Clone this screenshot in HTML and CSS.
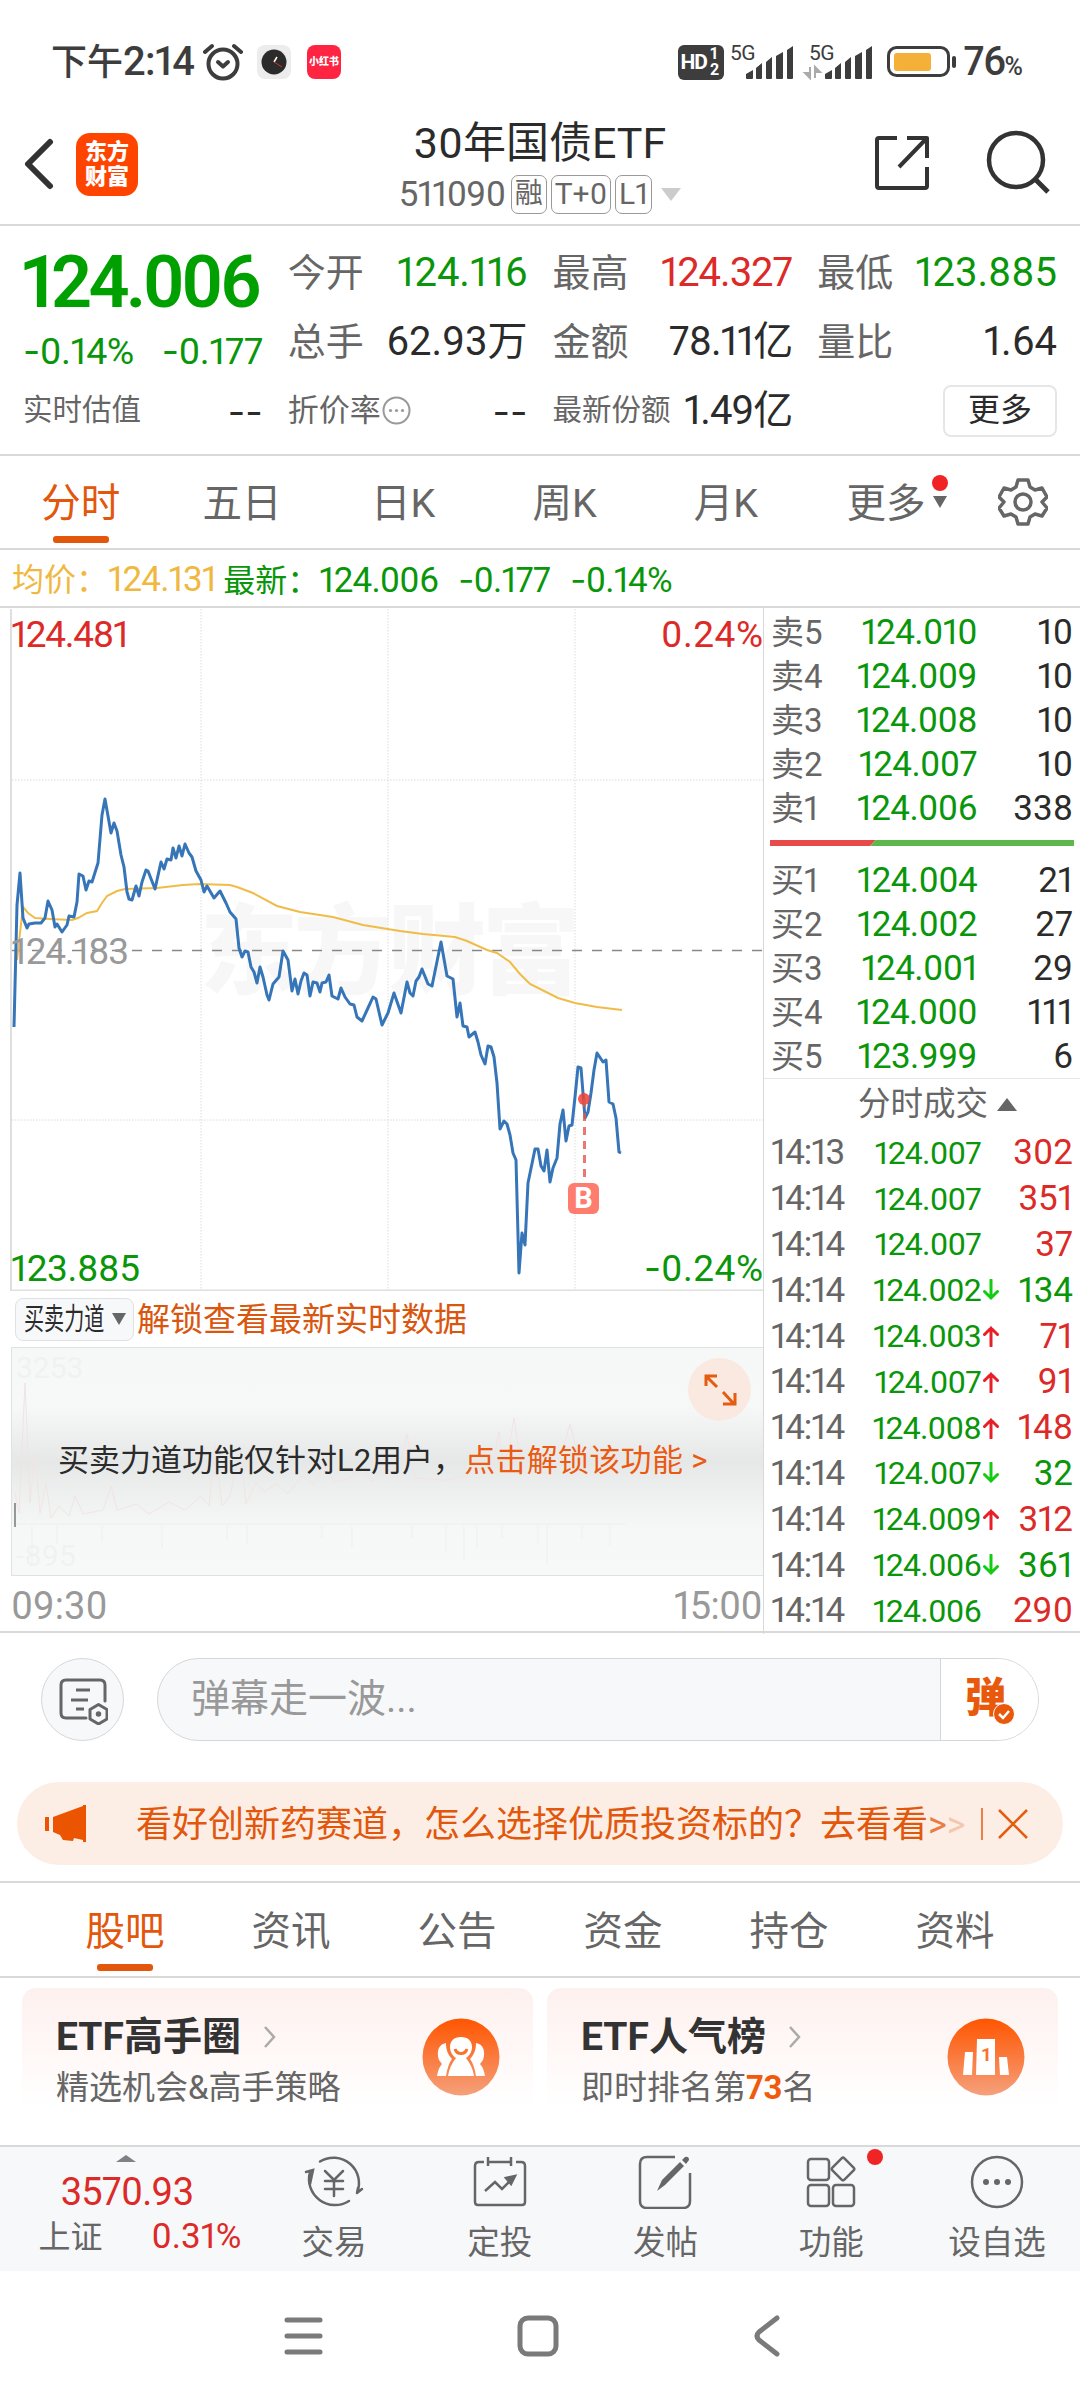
FILE: index.html
```html
<!DOCTYPE html>
<html lang="zh-CN">
<head>
  <meta charset="UTF-8">
  <title>30年国债ETF</title>
  <link rel="stylesheet" href="styles.css">
</head>
<body>
  <!-- status bar -->
  <div class="status">
    <div class="status-left">
      <span class="clock"><span class="cn">下午</span>2:14</span>
      <svg class="alarm" width="40" height="38" viewBox="0 0 40 38" fill="none" stroke="#3d3d3d" stroke-linecap="round">
        <circle cx="20" cy="21" r="14.5" stroke-width="4"/>
        <path d="M2 9l7-6M38 9l-7-6" stroke-width="4"/>
        <path d="M15 19l5 4.500 5-4.500" stroke-width="4" stroke-linejoin="round"/>
      </svg>
      <svg class="app-clock" width="34" height="34" viewBox="0 0 34 34">
        <rect width="34" height="34" rx="8" fill="#ececec"/>
        <circle cx="17" cy="17" r="12.500" fill="#2b2b2b"/>
        <path d="M17 17l3-5" stroke="#fff" stroke-width="1.500"/>
        <path d="M17 17l8 5" stroke="#c33" stroke-width="1"/>
      </svg>
      <span class="app-red">小红书</span>
    </div>
    <div class="status-right">
      <span class="hd">HD<span class="hd-n"><i>1</i><i>2</i></span></span>
      <svg class="sig" width="64" height="36" viewBox="0 0 64 36" fill="#3d3d3d">
        <text class="g5" x="0" y="16">5G</text>
        <path d="M16 30l7-4v8q0 1-1 1h-5q-1 0-1-1zM26 24l6-5v15q0 1-1 1h-4q-1 0-1-1zM36 18l6-5v21q0 1-1 1h-4q-1 0-1-1zM46 12l7-4v26q0 1-1 1h-5q-1 0-1-1zM57 6l6-4v32q0 1-1 1h-4q-1 0-1-1z"/>
      </svg>
      <svg class="sig" width="68" height="36" viewBox="0 0 68 36" fill="#3d3d3d">
        <text class="g5" x="4" y="16">5G</text>
        <path d="M5 23v11L0 29h4M10 34V23l5 5h-4" fill="#aaa" stroke="#aaa" stroke-width="2"/>
        <path d="M20 30l7-4v8q0 1-1 1h-5q-1 0-1-1zM30 24l6-5v15q0 1-1 1h-4q-1 0-1-1zM40 18l6-5v21q0 1-1 1h-4q-1 0-1-1zM50 12l7-4v26q0 1-1 1h-5q-1 0-1-1zM61 6l6-4v32q0 1-1 1h-4q-1 0-1-1z"/>
      </svg>
      <svg class="battery" width="70" height="32" viewBox="0 0 70 32">
        <rect x="1.500" y="1.500" width="60" height="28" rx="8" fill="none" stroke="#3d3d3d" stroke-width="3"/>
        <rect x="7" y="7" width="37" height="18" rx="3" fill="#f5b03a"/>
        <rect x="65" y="10" width="4" height="12" rx="2" fill="#3d3d3d"/>
      </svg>
      <span class="bat-num">76<small>%</small></span>
    </div>
  </div>

  <!-- title bar -->
  <header class="header">
    <div class="header-left">
      <svg width="32" height="54" viewBox="0 0 32 54" fill="none" stroke="#333" stroke-width="6" stroke-linecap="round" stroke-linejoin="round"><path d="M26 5L4 27l22 22"/></svg>
      <div class="logo">东方<br>财富</div>
    </div>
    <div class="header-mid">
      <h1>30年国债ETF</h1>
      <div class="code"><span class="code-num">511090</span><b>融</b><b>T+0</b><b>L1</b><i class="tri-code"></i></div>
    </div>
    <div class="header-right">
      <svg width="54" height="54" viewBox="0 0 54 54" fill="none" stroke="#333" stroke-width="4" stroke-linejoin="round">
        <path d="M22 2H4q-2 0-2 2v46q0 2 2 2h46q2 0 2-2V31M32 2h20v20M51 3L24 31"/>
      </svg>
      <svg width="66" height="66" viewBox="0 0 66 66" fill="none" stroke="#333" stroke-width="4.500"><circle cx="30" cy="30" r="27"/><path d="M49 49l13 13" stroke-width="5"/></svg>
    </div>
  </header>

  <!-- quote -->
  <section class="quote">
    <div class="last">124.006</div>
    <div class="cell"><label>今开</label><span class="green">124.116</span></div>
    <div class="cell"><label>最高</label><span class="red tight">124.327</span></div>
    <div class="cell"><label>最低</label><span class="green">123.885</span></div>
    <div class="chg green"><span><i class="neg">-</i>0.14%</span><span><i class="neg">-</i>0.177</span></div>
    <div class="cell"><label>总手</label><span>62.93万</span></div>
    <div class="cell"><label>金额</label><span class="tight">78.11亿</span></div>
    <div class="cell"><label>量比</label><span>1.64</span></div>
    <div class="cell"><label class="s">实时估值</label><span class="dash">--</span></div>
    <div class="cell"><label class="m">折价率</label>
      <svg class="info" width="29" height="29" viewBox="0 0 29 29"><circle cx="14.500" cy="14.500" r="13" fill="none" stroke="#999" stroke-width="2"/><g fill="#999"><circle cx="8.500" cy="14.500" r="1.600"/><circle cx="14.500" cy="14.500" r="1.600"/><circle cx="20.500" cy="14.500" r="1.600"/></g></svg>
      <span class="dash">--</span></div>
    <div class="cell"><label class="s">最新份额</label><span class="tight">1.49亿</span></div>
    <div class="cell"><span class="more">更多</span></div>
  </section>

  <nav class="tabs">
    <a class="on">分时</a><a>五日</a><a>日K</a><a>周K</a><a>月K</a>
    <a class="tab-more">更多<i class="tri-tab"></i><i class="dot"></i></a>
    <svg width="50" height="50" viewBox="0 0 50 50" fill="none" stroke="#666" stroke-width="3.500" stroke-linejoin="round">
      <path d="M20 3h10l2 7 5 3 7-2 5 9-5 5 5 6-5 8-7-2-5 3-2 7H20l-2-7-5-3-7 2-5-8 5-6-5-5 5-9 7 2 5-3z"/><circle cx="25" cy="25" r="8"/>
    </svg>
  </nav>

  <div class="avg"><span class="yellow">均价：<em>124.131</em></span><span class="green">最新：<em>124.006</em><em><i class="neg">-</i>0.177</em><em><i class="neg">-</i>0.14%</em></span></div>

  <main class="board">
    <div class="left">
      <svg class="chart" width="763" height="683" viewBox="0 608 763 683" fill="none">
        <text class="wm" x="200" y="986" textLength="380">东方财富</text>
        <path d="M201 609V1290M388 609V1290M575 609V1290M12 780H763M12 1120H763" stroke="#dcdcdc" stroke-dasharray="1.500 1.500"/>
        <path d="M11 609V1290.500H763" stroke="#dfdfdf" stroke-width="2"/>
        <path d="M12 950.500H763" stroke="#888" stroke-width="1.500" stroke-dasharray="10 10"/>
        <polyline class="avg-line" points="17,960 20,933 23,907 28,913 35,918 50,919 72,920 78,918 87,913 97,911 102,903 107,896 117,891 125,889 157,888 183,885 200,884 230,885 237,887 253,893 277,906 300,912 333,917 363,925 400,931 423,934 455,937 467,941 487,950 497,953 510,962 520,974 530,984 558,998 575,1003 597,1007 622,1010"/>
        <polyline class="price-line" points="14,1027 17,905 20,873 23,918 27,928 29,924 35,923 41,923 45,918 48,901 52,910 55,927 57,924 62,932 67,925 69,916 74,917 77,902 79,874 83,876 86,890 89,881 92,882 98,863 102,815 105,799 111,833 114,823 117,831 121,855 124,867 127,892 129,899 132,900 136,886 139,896 142,882 146,870 148,871 155,889 161,862 164,869 167,859 171,860 173,848 176,858 179,846 182,856 185,844 189,853 192,857 196,871 201,880 204,892 207,886 214,898 220,891 226,903 230,912 236,919 239,948 242,957 245,951 248,952 251,967 254,972 257,983 260,967 263,977 267,995 269,1000 273,984 279,977 283,951 288,960 292,991 295,979 298,994 301,981 304,973 307,975 310,996 313,982 317,983 320,992 322,983 326,982 329,975 332,996 338,999 341,988 345,997 350,1004 354,1005 357,1017 362,1021 368,1008 373,997 376,999 382,1025 388,1013 394,993 401,1013 407,982 410,993 413,996 416,981 419,977 422,969 428,984 432,986 441,942 447,976 453,979 457,1017 460,1003 463,1026 467,1027 469,1037 475,1032 478,1042 481,1055 485,1064 488,1046 491,1047 494,1057 497,1083 500,1129 504,1121 507,1124 510,1135 513,1153 516,1160 519,1273 522,1233 525,1245 528,1183 535,1149 538,1149 541,1166 544,1171 547,1150 550,1182 553,1168 557,1158 560,1124 563,1110 566,1141 569,1126 572,1125 575,1097 578,1067 581,1068 585,1118 588,1112 591,1093 594,1070 597,1053 603,1062 606,1060 609,1102 613,1104 616,1118 619,1152 621,1153"/>
        <circle cx="584" cy="1099" r="6" fill="#ee4035" fill-opacity=".85"/>
        <path d="M584.500 1099V1178" stroke="#e0574c" stroke-opacity=".8" stroke-width="3" stroke-dasharray="8 6"/>
        <rect x="568" y="1183" width="31" height="31" rx="6" fill="#ff7d6e"/>
        <text class="buy" x="583.500" y="1208" text-anchor="middle">B</text>
        <text class="lab" x="11" y="646.500" fill="#dc2a28" textLength="118">124.481</text>
        <text class="lab" x="763" y="646.500" fill="#dc2a28" text-anchor="end" textLength="102">0.24%</text>
        <text class="lab" x="11" y="963.500" fill="#999" textLength="118">124.183</text>
        <text class="lab" x="11" y="1280.500" fill="#0a960a" textLength="129">123.885</text>
        <text class="lab" x="763" y="1280.500" fill="#0a960a" text-anchor="end" textLength="102">0.24%</text>
        <text class="lab neg" x="644" y="1280.500" fill="#0a960a">-</text>
      </svg>
      <div class="sub-bar">
        <span class="pick"><span>买卖力道</span><i></i></span><span class="unlock">解锁查看最新实时数据</span>
      </div>
      <div class="sub-chart">
        <svg class="ghost" width="752" height="226" viewBox="0 0 752 226" fill="none">
          <text x="4" y="30">3253</text><text x="4" y="218">-895</text>
          <path d="M3 145l4 20 6-130 5 120 5-50 5 60 6-30 5 35 8-12 10 10 6-20 8 18 20-4 8-24 6 24 20-6 12 10 20-12 16 8 16-14 8 10 6-60 7 60 8-10 10-50 6 58 10-22 8 10 12-8 12 10 14-18 12 8 10-20 10 18 16-4 12-10 10 14 16-20 10 14 9-42 8 44 30 2 22-4 12-20 12 16 8-40 6 42 9-56 8 54 12-26 10 28 14-8 12-42 10 40 14-20 12 22 20-14 12 10 10-16 8 18" stroke="#f1e4e3"/>
          <path d="M3 176h610M20 178v40M45 178v18M90 178v16M150 178v22M215 178v15M235 178v18M310 178v12M340 178v22M400 178v12M434 178v26M452 178v34M465 178v22M490 178v12M526 178v18M535 178v38M570 178v12M598 178v20" stroke="#edefef"/>
          <path d="M3 155v24" stroke="#777" stroke-width="1.500"/>
        </svg>
        <p>买卖力道功能仅针对L2用户，<a>点击解锁该功能 &gt;</a></p>
        <span class="expand"><svg width="34" height="34" viewBox="0 0 34 34" fill="none" stroke="#e35c10" stroke-width="3"><path d="M3 13V3h11M3 3l11 11M32 20v11H20M31 31L20 19"/></svg></span>
      </div>
      <div class="hours"><span>09:30</span><span>15:00</span></div>
    </div>

    <div class="right">
      <div class="depth">
        <div><span>卖5</span><em>124.010</em><b>10</b></div>
        <div><span>卖4</span><em>124.009</em><b>10</b></div>
        <div><span>卖3</span><em>124.008</em><b>10</b></div>
        <div><span>卖2</span><em>124.007</em><b>10</b></div>
        <div><span>卖1</span><em>124.006</em><b>338</b></div>
      </div>
      <svg class="ratio" width="304" height="6" viewBox="0 0 304 6"><path d="M0 0h106l-6 6H0z" fill="#e84a4a"/><path d="M106 0h198v6H100z" fill="#5cb84a"/></svg>
      <div class="depth">
        <div><span>买1</span><em>124.004</em><b>21</b></div>
        <div><span>买2</span><em>124.002</em><b>27</b></div>
        <div><span>买3</span><em>124.001</em><b>29</b></div>
        <div><span>买4</span><em>124.000</em><b>111</b></div>
        <div><span>买5</span><em>123.999</em><b>6</b></div>
      </div>
      <div class="deal-head">分时成交<i></i></div>
      <div class="deals">
        <div><span>14:13</span><em>124.007</em><i></i><b class="red">302</b></div>
        <div><span>14:14</span><em>124.007</em><i></i><b class="red">351</b></div>
        <div><span>14:14</span><em>124.007</em><i></i><b class="red">37</b></div>
        <div><span>14:14</span><em>124.002</em><i class="down"><svg viewBox="0 0 16 22"><path d="M8 1v18M1.500 12.500L8 19l6.500-6.500"/></svg></i><b class="green">134</b></div>
        <div><span>14:14</span><em>124.003</em><i class="up"><svg viewBox="0 0 16 22"><path d="M8 21V3M1.500 9.500L8 3l6.500 6.500"/></svg></i><b class="red">71</b></div>
        <div><span>14:14</span><em>124.007</em><i class="up"><svg viewBox="0 0 16 22"><path d="M8 21V3M1.500 9.500L8 3l6.500 6.500"/></svg></i><b class="red">91</b></div>
        <div><span>14:14</span><em>124.008</em><i class="up"><svg viewBox="0 0 16 22"><path d="M8 21V3M1.500 9.500L8 3l6.500 6.500"/></svg></i><b class="red">148</b></div>
        <div><span>14:14</span><em>124.007</em><i class="down"><svg viewBox="0 0 16 22"><path d="M8 1v18M1.500 12.500L8 19l6.500-6.500"/></svg></i><b class="green">32</b></div>
        <div><span>14:14</span><em>124.009</em><i class="up"><svg viewBox="0 0 16 22"><path d="M8 21V3M1.500 9.500L8 3l6.500 6.500"/></svg></i><b class="red">312</b></div>
        <div><span>14:14</span><em>124.006</em><i class="down"><svg viewBox="0 0 16 22"><path d="M8 1v18M1.500 12.500L8 19l6.500-6.500"/></svg></i><b class="green">361</b></div>
        <div><span>14:14</span><em>124.006</em><i></i><b class="red">290</b></div>
      </div>
    </div>
  </main>

  <!-- comment input -->
  <div class="danmu">
    <span class="danmu-set">
      <svg width="50" height="50" viewBox="0 0 50 50" fill="none" stroke="#666" stroke-width="3">
        <path d="M28 43H8q-5 0-5-5V10q0-5 5-5h34q5 0 5 5v16" stroke-linecap="round"/>
        <path d="M18 15h14M13 25h17M18 34h8"/>
        <path d="M40.500 29.500l8.500 5v9.500l-8.500 5-8.500-5v-9.500z" stroke-linejoin="round"/><circle cx="40.500" cy="39" r="2" fill="#666" stroke-width="1.500"/>
      </svg>
    </span>
    <div class="danmu-input">
      <span class="ph">弹幕走一波...</span>
      <span class="danmu-on">弹<svg width="22" height="22" viewBox="0 0 22 22"><circle cx="11" cy="11" r="10.500" fill="#e8590c" stroke="#fff"/><path d="M6 11l4 4 6-7" fill="none" stroke="#fff" stroke-width="2.500"/></svg></span>
    </div>
  </div>

  <div class="banner">
    <svg width="42" height="38" viewBox="0 0 42 38" fill="#eb5400"><path d="M0 12h4v14H0zM8 12L38 1V0h3v37h-3v-2l-9-2-1 3-10-1-3-5-7-3z"/></svg>
    <span class="banner-text">看好创新药赛道，怎么选择优质投资标的？去看看<span class="gg"><i>&gt;</i><i>&gt;</i></span></span>
    <svg class="close" width="48" height="34" viewBox="0 0 48 34" fill="none" stroke="#e35c10"><path d="M1 1v32" stroke-width="1.500"/><path d="M18 3l28 28M46 3L18 31" stroke-width="2.500"/></svg>
  </div>

  <nav class="tabs tabs2">
    <a class="on">股吧</a><a>资讯</a><a>公告</a><a>资金</a><a>持仓</a><a>资料</a>
  </nav>

  <div class="cards">
    <div class="card">
      <div>
        <h2>ETF高手圈<svg width="12" height="22" viewBox="0 0 12 22"><path d="M1 1l9 10-9 10"/></svg></h2>
        <p>精选机会&amp;高手策略</p>
      </div>
      <svg width="78" height="78" viewBox="0 0 78 78">
        <defs><linearGradient id="og" x2="0" y2="1"><stop stop-color="#ff5500"/><stop offset="1" stop-color="#f5a07c"/></linearGradient></defs>
        <circle cx="39" cy="39" r="38.500" fill="url(#og)"/>
        <path fill="#fff" d="M24 25c-7 1-10 8-7 17l3 4c-3 3-4 7-5 12h9c1-7 3-13 6-17-5-5-6-11-6-16zM54 25c7 1 10 8 7 17l-3 4c3 3 4 7 5 12h-9c-1-7-3-13-6-17 5-5 6-11 6-16z"/>
        <path fill="#fff" d="M39 19c-7 0-11 4-11 10 0 5 3 9 6 11-4 5-7 11-8 18h26c-1-7-4-13-8-18 3-2 6-6 6-11 0-6-4-10-11-10z"/>
        <path d="M33 31c2 6 10 6 12 0" fill="none" stroke="#f8732c" stroke-width="3"/>
      </svg>
    </div>
    <div class="card">
      <div>
        <h2>ETF人气榜<svg width="12" height="22" viewBox="0 0 12 22"><path d="M1 1l9 10-9 10"/></svg></h2>
        <p>即时排名第<b>73</b>名</p>
      </div>
      <svg width="78" height="78" viewBox="0 0 78 78">
        <circle cx="39" cy="39" r="38.500" fill="url(#og)"/>
        <path fill="#fff" d="M18 34h8l-1 23h-9zM30 21h18v36H29zM52 39h8l2 18h-9z"/>
        <text class="first" x="39" y="43" text-anchor="middle">1</text>
      </svg>
    </div>
  </div>

  <!-- bottom toolbar -->
  <footer class="toolbar">
    <div class="index">
      <i></i>
      <span class="pts">3570.93</span>
      <span class="idx"><label>上证</label>0.31%</span>
    </div>
    <div class="tool">
      <svg width="62" height="56" viewBox="0 0 62 56" fill="none" stroke="#666" stroke-width="2.500" stroke-linecap="round">
        <path d="M17 8.500A25.500 25.500 0 0 1 54 40l5-4M46 48A26 26 0 0 1 7 19M3 19l7-2-3 14M54 40l1-5"/>
        <path d="M22 18l9 9 9-9M31 27v16M22 28h18M22 36h18"/>
      </svg>
      <span>交易</span>
    </div>
    <div class="tool">
      <svg width="54" height="56" viewBox="0 0 54 56" fill="none" stroke="#666" stroke-width="2.500">
        <path d="M11 9H6q-4 0-4 4v36q0 3 3 3h44q3 0 3-3V13q0-4-4-4h-5M15 9h23M15 4v9M38 4v9"/>
        <path d="M12 38l10-9 7 7 9-9"/><path d="M33 25l9-2-4 8z" fill="#666"/>
      </svg>
      <span>定投</span>
    </div>
    <div class="tool">
      <svg width="54" height="56" viewBox="0 0 54 56" fill="none" stroke="#666" stroke-width="2.500">
        <path d="M37 4H9q-7 0-7 7v37q0 7 7 7h36q7 0 7-7V20"/>
        <path d="M19 38l5-11L42 9l4 4-19 19zM44 7l3-3q4-1 4 3l-3 4z" fill="#666" stroke="none"/>
      </svg>
      <span>发帖</span>
    </div>
    <div class="tool">
      <svg width="50" height="56" viewBox="0 0 50 56" fill="none" stroke="#666" stroke-width="2.500">
        <rect x="2" y="6" width="21" height="21" rx="3"/><rect x="2" y="32" width="21" height="21" rx="3"/><rect x="27" y="32" width="21" height="21" rx="3"/>
        <rect x="28.500" y="7.500" width="17" height="17" rx="2" transform="rotate(45 37 16)"/>
      </svg>
      <span>功能</span><i class="dot"></i>
    </div>
    <div class="tool">
      <svg width="54" height="56" viewBox="0 0 54 56"><circle cx="27" cy="29" r="25" fill="none" stroke="#666" stroke-width="2.500"/><g fill="#666"><circle cx="16" cy="29" r="3"/><circle cx="27" cy="29" r="3"/><circle cx="38" cy="29" r="3"/></g></svg>
      <span>设自选</span>
    </div>
  </footer>

  <div class="sysnav">
    <svg width="40" height="42" viewBox="0 0 40 42" stroke="#7a7a7a" stroke-width="5" stroke-linecap="round"><path d="M4 5h33M4 21h33M4 37h33"/></svg>
    <svg width="42" height="42" viewBox="0 0 42 42" fill="none" stroke="#7a7a7a" stroke-width="5"><rect x="3" y="3" width="36" height="36" rx="8"/></svg>
    <svg width="28" height="44" viewBox="0 0 28 44" fill="none" stroke="#7a7a7a" stroke-width="5" stroke-linecap="round" stroke-linejoin="round"><path d="M24 4L6 18q-4 4 0 8l18 14"/></svg>
  </div>
</body>
</html>
```
FILE: styles.css
```css
:root {
  --orange: #e2570c;
  --green: #0a960a;
  --red: #dc2a28;
  --gray: #666;
  --line: #d9d9d9;
}

* {
  box-sizing: border-box;
}

body {
  margin: 0;
  width: 1080px;
  height: 2400px;
  overflow: hidden;
  background: #fff;
  color: #2b2b2b;
  font-family: Roboto, "Noto Sans CJK SC", sans-serif;
  font-variant-numeric: proportional-nums;
  line-height: 1;
}

i, em {
  font-style: normal;
}

svg {
  display: block;
  flex: none;
}

.green { color: var(--green); }
.red { color: var(--red); }
.yellow { color: #f0b840; }

/* wider minus sign */
.neg {
  font-family: Inter, sans-serif;
}

/* status bar */
.status {
  height: 100px;
  padding: 24px 57px 0 51px;
  display: flex;
  justify-content: space-between;
  align-items: center;
  color: #3d3d3d;
}

.status-left, .status-right {
  display: flex;
  align-items: center;
}

.clock {
  font-size: 40px;
  font-weight: 500;
  letter-spacing: -.8px;
  white-space: nowrap;
  width: 150px;
}

.clock .cn {
  font-size: 36px;
  letter-spacing: 0;
}

.alarm { margin-left: 2px; }
.app-clock { margin-left: 14px; }

.app-red {
  margin-left: 16px;
  width: 34px;
  height: 34px;
  border-radius: 8px;
  background: #ff2442;
  color: #fff;
  font-size: 10px;
  font-weight: 900;
  line-height: 34px;
  text-align: center;
}

.hd {
  width: 46px;
  height: 35px;
  margin-right: 6px;
  padding-left: 3px;
  border-radius: 6px;
  background: #3d3d3d;
  color: #fff;
  font-size: 21px;
  font-weight: 700;
  display: flex;
  align-items: center;
  letter-spacing: -1px;
}

.hd-n {
  display: flex;
  flex-direction: column;
  font-size: 16px;
  margin-left: 3px;
}

.sig { overflow: visible; }

.g5 {
  font-size: 21px;
  letter-spacing: -.5px;
}

.status-right svg + svg { margin-left: 11px; }
.status-right svg.battery { margin-left: 14px; }

.bat-num {
  font-size: 40px;
  font-weight: 500;
  letter-spacing: -1.5px;
  margin-left: 7px;
}

.bat-num small {
  font-size: 25px;
  letter-spacing: 0;
}

/* title bar */
.header {
  height: 126px;
  border-bottom: 2px solid var(--line);
  display: grid;
  grid-template-columns: 1fr 340px 1fr;
}

.header-left {
  display: flex;
  align-items: center;
  padding: 4px 0 0 24px;
}

.logo {
  margin-left: 20px;
  width: 62px;
  height: 63px;
  border-radius: 14px;
  background: #ff4400;
  color: #fff;
  font-size: 22px;
  font-weight: 900;
  line-height: 25px;
  padding-top: 6px;
  text-align: center;
}

.header-mid {
  display: flex;
  flex-direction: column;
  align-items: center;
  padding-top: 20px;
}

h1 {
  margin: 0;
  font-size: 43px;
  font-weight: 400;
  line-height: 46px;
  white-space: nowrap;
}

.code {
  display: flex;
  align-items: center;
  gap: 4px;
  margin-top: 9px;
  color: var(--gray);
  font-size: 35px;
}

.code-num {
  width: 108px;
  letter-spacing: -.7px;
}

.code b {
  height: 39px;
  padding: 0 3px;
  border: 1.5px solid #999;
  border-radius: 7px;
  font-size: 30px;
  line-height: 36px;
  font-weight: 400;
}

.code b:nth-of-type(1) {
  font-size: 28px;
}

.tri-code {
  margin-left: 5px;
  border: 10px solid transparent;
  border-top: 13px solid #ccc;
  border-bottom: 0;
}

.header-right {
  display: flex;
  align-items: center;
  justify-content: flex-end;
  gap: 57px;
  padding: 2px 28px 0 0;
}

/* quote */
.quote {
  height: 230px;
  border-bottom: 2px solid var(--line);
  padding: 12px 23px 0;
  display: grid;
  grid-template-columns: repeat(4, minmax(0, 1fr));
  grid-template-rows: 69px 69px 69px;
  column-gap: 25px;
}

.cell {
  display: flex;
  align-items: center;
  justify-content: space-between;
  font-size: 40px;
  white-space: nowrap;
}

.cell label {
  color: var(--gray);
  font-size: 38px;
}

.cell label.s { font-size: 29.5px; }
.cell label.m { font-size: 31px; }
.cell .tight { letter-spacing: -1px; }

.cell .dash {
  font-family: Inter, sans-serif;
  font-size: 38px;
}

.info {
  margin-right: auto;
  margin-left: 1px;
}

.last {
  color: #00a000;
  font-size: 72px;
  font-weight: 600;
  letter-spacing: -3.8px;
  line-height: 89px;
  margin-left: -2px;
  white-space: nowrap;
}

.chg {
  display: flex;
  justify-content: space-between;
  align-items: center;
  font-size: 37.5px;
  padding-top: 20px;
  letter-spacing: -.5px;
}

.more {
  margin-left: auto;
  width: 114px;
  height: 52px;
  border: 2px solid #e6e6e6;
  border-radius: 8px;
  font-size: 32px;
  line-height: 47px;
  text-align: center;
}

/* tabs */
.tabs {
  height: 94px;
  border-bottom: 2px solid var(--line);
  display: flex;
  align-items: center;
  color: var(--gray);
  font-size: 39.5px;
}

.tabs a {
  position: relative;
  width: 161.3px;
  height: 92px;
  line-height: 95px;
  text-align: center;
}

.tabs .on { color: var(--orange); }

.tabs .on::after {
  content: "";
  position: absolute;
  left: 50%;
  bottom: 5px;
  width: 56px;
  height: 7px;
  margin-left: -28px;
  border-radius: 3px;
  background: var(--orange);
}

.tabs a.tab-more {
  width: 192px;
  padding-left: 40px;
  text-align: left;
}

.tri-tab {
  display: inline-block;
  margin-left: 8px;
  vertical-align: 9px;
  border: 7px solid transparent;
  border-top: 12px solid var(--gray);
  border-bottom: 0;
}

.dot {
  position: absolute;
  width: 16px;
  height: 16px;
  border-radius: 50%;
  background: #f02424;
}

.tab-more .dot {
  left: 126px;
  top: 19px;
}

/* average line */
.avg {
  height: 58px;
  border-bottom: 2px solid var(--line);
  padding: 3px 0 0 12px;
  display: flex;
  align-items: center;
  gap: 7px;
  font-size: 32px;
  white-space: nowrap;
}

.avg em {
  font-size: 35px;
  letter-spacing: -.8px;
}

.avg em + em { margin-left: 20px; }

/* chart board */
.board {
  height: 1025px;
  border-bottom: 2px solid var(--line);
  display: grid;
  grid-template-columns: 763px 317px;
}

.wm {
  font-size: 98px;
  font-weight: 900;
  fill: #f7f7f7;
}

.lab { font-size: 37px; }

.avg-line {
  stroke: #f0bc48;
  stroke-width: 2;
}

.price-line {
  stroke: #3575b8;
  stroke-width: 3;
  stroke-linejoin: round;
}

.buy {
  font-size: 29px;
  font-weight: 700;
  fill: #fff;
}

.sub-bar {
  height: 56px;
  display: flex;
  align-items: center;
  padding-left: 15px;
}

.pick {
  width: 119px;
  height: 43px;
  border: 1.5px solid #e0e1e4;
  border-radius: 8px;
  background: #f7f8fa;
  display: flex;
  align-items: center;
  padding-left: 8px;
  font-size: 30px;
  white-space: nowrap;
}

.pick span {
  width: 88px;
  transform: scaleX(.67);
  transform-origin: 0 50%;
}

.pick i {
  border: 7px solid transparent;
  border-top: 12px solid var(--gray);
  border-bottom: 0;
}

.unlock {
  margin-left: 3px;
  color: #d9560f;
  font-size: 33px;
}

.sub-chart {
  position: relative;
  height: 229px;
  margin-left: 11px;
  border: 1.5px solid #dfe2e2;
  border-right: 0;
  background: linear-gradient(#f6f8f8 0%, #f7f8f8 25%, #e6e8e8 50%, #eceeee 60%, #f6f8f8 80%, #f7f9f9 100%);
  display: flex;
  align-items: center;
}

.ghost {
  position: absolute;
  left: 0;
  top: 0;
}

.ghost text {
  font-size: 30px;
  fill: #f0f2f2;
}

.sub-chart p {
  position: relative;
  margin: 0 0 2px 46px;
  font-size: 31px;
  white-space: nowrap;
}

.sub-chart a {
  color: #ea5a12;
  letter-spacing: .3px;
}

.expand {
  position: absolute;
  right: 12px;
  top: 10px;
  width: 63px;
  height: 63px;
  border-radius: 50%;
  background: #fae9e1;
  display: flex;
  align-items: center;
  justify-content: center;
}

.hours {
  height: 56px;
  padding: 3px 1px 0 11px;
  display: flex;
  justify-content: space-between;
  align-items: center;
  color: #999;
  font-size: 38px;
}

.hours span + span { letter-spacing: -.6px; }

.right {
  border-left: 1.5px solid var(--line);
}

.depth {
  padding-top: 2px;
}

.depth div, .deals div {
  height: 44px;
  padding: 0 7px;
  display: grid;
  grid-template-columns: 76px 130px 1fr;
  align-items: center;
  font-size: 35px;
  white-space: nowrap;
}

.depth span { color: var(--gray); font-size: 33px; }
.depth em, .depth b { text-align: right; font-weight: 400; }
.depth em, .deals em { color: var(--green); }
.depth em { letter-spacing: -.6px; }

.ratio {
  margin: 10px 0 10px 6px;
}

.deal-head {
  height: 52px;
  border-top: 1.5px solid #e6e6e6;
  padding: 0 63px 0 0;
  display: flex;
  align-items: center;
  justify-content: flex-end;
  color: var(--gray);
  font-size: 32.5px;
}

.deal-head i {
  margin-left: 9px;
  border: 10px solid transparent;
  border-bottom: 13px solid var(--gray);
  border-top: 0;
}

.deals div {
  height: 45.8px;
  grid-template-columns: 86px 124px 18px 1fr;
  font-size: 35px;
}

.deals span {
  color: var(--gray);
  letter-spacing: -1px;
}

.deals em {
  font-size: 32px;
  letter-spacing: -.8px;
  text-align: right;
}

.deals b {
  font-weight: 400;
  text-align: right;
}

.deals svg {
  width: 16px;
  height: 22px;
  margin-left: 2px;
  fill: none;
  stroke-width: 3;
  stroke-linecap: round;
}

.up svg { stroke: #e81e28; }
.down svg { stroke: #12cc12; }

/* comment input */
.danmu {
  height: 149px;
  padding: 25px 41px 0 41px;
  display: flex;
}

.danmu-set {
  width: 83px;
  height: 83px;
  border: 1.5px solid #d4d7da;
  border-radius: 50%;
  background: #f7f8fa;
  display: flex;
  align-items: center;
  justify-content: center;
}

.danmu-input {
  flex: 1;
  height: 83px;
  margin-left: 33px;
  border: 1.5px solid #d4d7da;
  border-radius: 42px;
  background: #f7f8fa;
  overflow: hidden;
  display: flex;
}

.ph {
  flex: 1;
  padding-left: 33px;
  color: #999;
  font-size: 39px;
  line-height: 80px;
}

.danmu-on {
  position: relative;
  width: 98px;
  padding-left: 24px;
  border-left: 1.5px solid #d4d7da;
  background: #fff;
  color: #e8590c;
  font-size: 41px;
  font-weight: 900;
  line-height: 79px;
}

.danmu-on svg {
  position: absolute;
  left: 52px;
  top: 44px;
}

.banner {
  height: 83px;
  margin: 0 17px;
  padding: 0 34px 0 28px;
  border-radius: 42px;
  background: #fdeee5;
  display: flex;
  align-items: center;
  color: var(--orange);
}

.banner-text {
  flex: 1;
  margin-left: 49px;
  padding-top: 2px;
  font-size: 36px;
  white-space: nowrap;
}

.gg i { opacity: .75; }
.gg i + i { opacity: .25; }

.tabs2 {
  height: 97px;
  margin-top: 16px;
  border-top: 2px solid var(--line);
  padding-left: 42px;
}

.tabs2 a {
  width: 166px;
}

/* cards */
.cards {
  height: 167px;
  padding: 10px 22px 0;
  display: flex;
  gap: 14px;
}

.card {
  flex: 1;
  height: 120px;
  padding: 19px 33px 0 34px;
  border-radius: 14px 14px 0 0;
  background: linear-gradient(#fdf1ef, #fff9f8 60%, #fff);
  display: flex;
  justify-content: space-between;
}

.card > svg { margin-top: 11px; }

h2 {
  margin: 0;
  display: flex;
  align-items: center;
  font-size: 39px;
  line-height: 60px;
  font-weight: 700;
  color: #333;
}

h2 svg {
  margin-left: 23px;
  fill: none;
  stroke: #aaa;
  stroke-width: 2.5;
}

.card p {
  margin: 0;
  font-size: 33px;
  line-height: 42px;
  color: var(--gray);
}

.card p b { color: #f05a0c; }

.first {
  font-size: 19px;
  font-weight: 700;
  fill: #f8732c;
}

/* bottom toolbar */
.toolbar {
  height: 126px;
  border-top: 2px solid var(--line);
  background: #f7f8fa;
  display: flex;
  color: var(--gray);
}

.index {
  width: 251px;
  display: flex;
  flex-direction: column;
  align-items: center;
  color: var(--red);
}

.index i {
  margin-top: 8px;
  border: 10px solid transparent;
  border-bottom: 7px solid #808085;
  border-top: 0;
}

.pts {
  margin: 11px 0 0 3px;
  font-size: 38px;
  letter-spacing: -.7px;
}

.idx {
  width: 203px;
  margin: 8px 0 0 29px;
  display: flex;
  justify-content: space-between;
  align-items: center;
  font-size: 35px;
}

.idx label {
  color: var(--gray);
  font-size: 32px;
}

.tool {
  position: relative;
  flex: 1;
  display: flex;
  flex-direction: column;
  align-items: center;
  padding-top: 6px;
  font-size: 32.5px;
}

.tool span { margin-top: 18px; }

.tool .dot {
  left: 119px;
  top: 2px;
}

/* system navigation */
.sysnav {
  height: 130px;
  display: flex;
  align-items: center;
  justify-content: center;
  gap: 194px;
  padding-right: 17px;
}
```
